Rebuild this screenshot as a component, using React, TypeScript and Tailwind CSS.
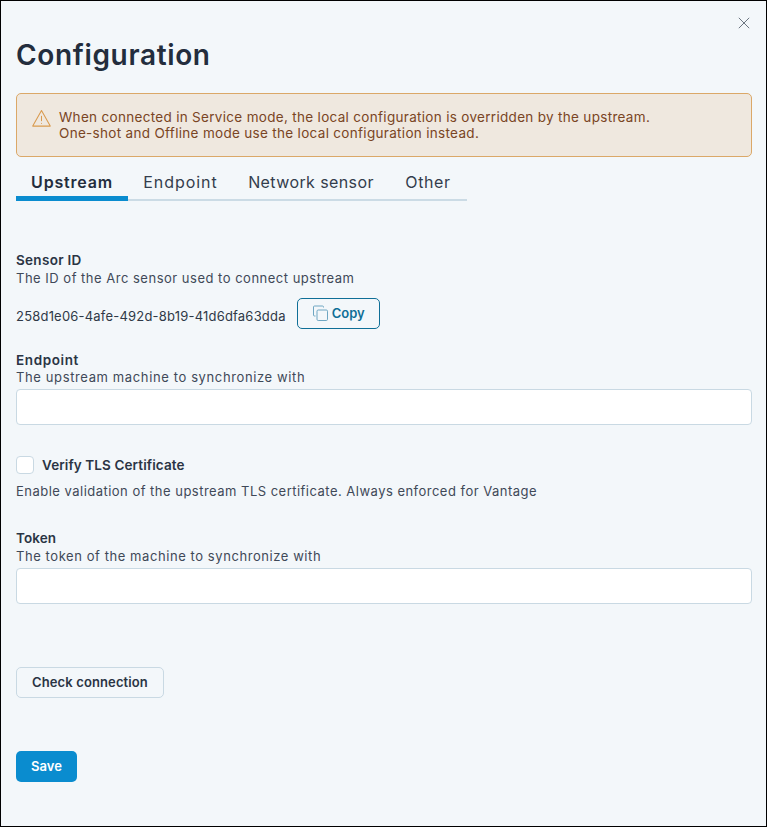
import React from "react";

function Label({ children, className = "" }: { children: React.ReactNode; className?: string }) {
  return <div className={`text-[13.5px] leading-[17px] font-semibold text-[#2a3444] ${className}`}>{children}</div>;
}
function Desc({ children, className = "" }: { children: React.ReactNode; className?: string }) {
  return <div className={`text-[13px] leading-[17px] text-[#3f4958] ${className}`}>{children}</div>;
}
function TextInput({ className = "mt-[3px]" }: { className?: string }) {
  return <input className={`block w-full h-[36px] rounded-[4px] border border-[#c9d9e3] bg-white ${className}`} />;
}

export default function App() {
  return (
    <div className="w-[767px] h-[827px] border border-black bg-[#f3f7fa] pl-[15px] pr-[14px] relative overflow-hidden font-['Inter','Noto_Sans',sans-serif]">
      <button className="absolute top-[16px] right-[16px] text-[#6b7580]" aria-label="Close">
        <svg width="12" height="12" viewBox="0 0 12 12" fill="none" stroke="currentColor" strokeWidth="1">
          <path d="M0.8 0.8 L11.2 11.2 M11.2 0.8 L0.8 11.2" />
        </svg>
      </button>

      <h1 className="pt-[36px] text-[28px] leading-[36px] font-semibold tracking-[0.65px] text-[#232d3d]">Configuration</h1>

      <div className="mt-[20px] h-[64px] rounded-[5px] border border-[#dba868] bg-[#efe8df] flex items-center pl-[15px] gap-[8px] text-[#7a4524]">
        <svg width="19" height="19" viewBox="0 0 18 18" fill="none" stroke="#d99a4e" strokeWidth="1" strokeLinejoin="round" className="shrink-0 mb-[13px]">
          <path d="M9 1.5 L17.3 16.2 H0.7 Z" />
          <path d="M9 6.5 V11.5" />
          <path d="M9 13.2 V14" />
        </svg>
        <div className="text-[13.5px] leading-[16px] tracking-[0.31px]">
          <div>When connected in Service mode, the local configuration is overridden by the upstream.</div>
          <div>One-shot and Offline mode use the local configuration instead.</div>
        </div>
      </div>

      <div className="flex w-[451px] h-[44px] border-b-[2px] border-[#cbdbe5] text-[16px] text-[#333d4c]">
        <div className="w-[112px] h-[44px] border-b-[5px] border-[#0a8ccf] font-semibold tracking-[0.8px] text-[#232d3d] text-center leading-[50px]">Upstream</div>
        <div className="w-[105px] text-center leading-[50px] tracking-[0.95px]">Endpoint</div>
        <div className="w-[156px] text-center leading-[50px] tracking-[0.4px]">Network sensor</div>
        <div className="w-[78px] text-center leading-[50px] tracking-[0.6px]">Other</div>
      </div>

      <div className="mt-[51px]">
        <Label className="tracking-[0.3px]">Sensor ID</Label>
        <Desc className="mt-[1px] tracking-[0.5px]">The ID of the Arc sensor used to connect upstream</Desc>
      </div>

      <div className="mt-[11px] flex items-center gap-[11px]">
        <span className="pt-[6px] text-[13px] tracking-[0.2px] text-[#2f3947]">258d1e06-4afe-492d-8b19-41d6dfa63dda</span>
        <button className="w-[83px] h-[31px] rounded-[5px] border border-[#0f6f97] flex items-center justify-center gap-[3px] text-[13px] font-semibold text-[#0f6f97]">
          <svg width="17" height="17" viewBox="0 0 17 17" fill="none" stroke="#6ea6c2" strokeWidth="1">
            <path d="M11.5 2.5 V2 a1 1 0 0 0 -1 -1 H2.5 a1 1 0 0 0 -1 1 V10 a1 1 0 0 0 1 1 H3.5" />
            <rect x="5" y="5" width="10.5" height="10.5" rx="1.2" />
          </svg>
          Copy
        </button>
      </div>

      <div className="mt-[23px]">
        <Label className="tracking-[0.6px]">Endpoint</Label>
        <Desc className="tracking-[0.62px]">The upstream machine to synchronize with</Desc>
        <TextInput />
      </div>

      <div className="mt-[31px] flex items-center gap-[8px]">
        <span className="w-[18px] h-[18px] rounded-[4px] border border-[#c9d9e3] bg-white" />
        <Label className="tracking-[0.1px]">Verify TLS Certificate</Label>
      </div>
      <div className="mt-[9px]"><Desc className="tracking-[0.48px]">Enable validation of the upstream TLS certificate. Always enforced for Vantage</Desc></div>

      <div className="mt-[30px]">
        <Label className="tracking-[0.1px]">Token</Label>
        <Desc className="mt-[1px] tracking-[0.57px]">The token of the machine to synchronize with</Desc>
        <TextInput />
      </div>

      <button className="block mt-[63px] w-[148px] h-[31px] rounded-[5px] border border-[#c9d9e3] bg-[#f3f7fa] text-[13px] font-semibold tracking-[0.12px] text-[#2a3444]">Check connection</button>

      <button className="block mt-[53px] w-[61px] h-[31px] rounded-[5px] bg-[#0a8ccf] text-[13px] font-semibold text-white">Save</button>
    </div>
  );
}
